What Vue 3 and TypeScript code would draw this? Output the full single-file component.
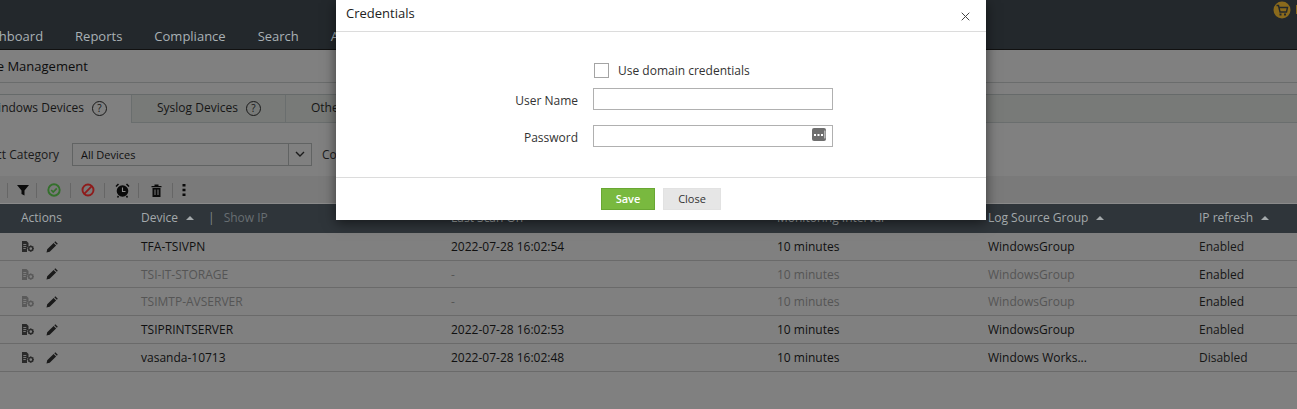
<script setup lang="ts">
interface Row { device: string; scan: string; group: string; ip: string; off?: boolean; short?: boolean }
const nav: string[] = ['Dashboard', 'Reports', 'Compliance', 'Search', 'Alerts']
const rows: Row[] = [
  { device: 'TFA-TSIVPN', scan: '2022-07-28 16:02:54', group: 'WindowsGroup', ip: 'Enabled' },
  { device: 'TSI-IT-STORAGE', scan: '-', group: 'WindowsGroup', ip: 'Enabled', off: true, short: true },
  { device: 'TSIMTP-AVSERVER', scan: '-', group: 'WindowsGroup', ip: 'Enabled', off: true },
  { device: 'TSIPRINTSERVER', scan: '2022-07-28 16:02:53', group: 'WindowsGroup', ip: 'Enabled' },
  { device: 'vasanda-10713', scan: '2022-07-28 16:02:48', group: 'Windows Works...', ip: 'Disabled' },
]
</script>

<template>
  <div class="page">
    <header class="top">
      <div class="util">
        <svg class="cart" width="18" height="18" viewBox="0 0 18 18">
          <circle cx="9" cy="9" r="8.5" fill="#8a6a1c" />
          <path d="M3.5 4.5h2l1.500 6.500h6.500l1-4.500H6" fill="none" stroke="#23282c" stroke-width="1.400" />
          <rect x="6.500" y="12.500" width="2" height="2" fill="#23282c" />
          <rect x="11" y="12.500" width="2" height="2" fill="#23282c" />
        </svg>
        <span class="util-mark"></span>
      </div>
      <nav class="nav">
        <span v-for="n in nav" :key="n">{{ n }}</span>
      </nav>
    </header>

    <div class="crumb">Device Management</div>

    <div class="tabs">
      <div class="tab active">Windows Devices <i class="q">?</i></div>
      <div class="tab syslog">Syslog Devices <i class="q">?</i></div>
      <div class="tab">Other Devices</div>
    </div>

    <div class="filter">
      <span class="filter-label">Select Category</span>
      <div class="select">
        <span class="select-val">All Devices</span>
        <span class="select-btn">
          <svg width="10" height="6" viewBox="0 0 10 6"><path d="M1 1l4 4 4-4" fill="none" stroke="#1c1c1c" stroke-width="1.400" /></svg>
        </span>
      </div>
      <span class="filter-next">Columns</span>
    </div>

    <div class="toolbar">
      <span class="tool first">
        <svg width="12" height="12" viewBox="0 0 12 12"><path d="M0 1h12L7.500 6.500V11.500L4.500 10V6.500z" fill="#0a0a0a" /></svg>
      </span>
      <span class="tool">
        <svg width="14" height="14" viewBox="0 0 14 14"><circle cx="7" cy="7" r="5.700" fill="none" stroke="#34702c" stroke-width="1.900" /><path d="M4.200 7l2 2 3.600-3.600" fill="none" stroke="#34702c" stroke-width="1.700" /></svg>
      </span>
      <span class="tool">
        <svg width="14" height="14" viewBox="0 0 14 14"><circle cx="7" cy="7" r="5.500" fill="none" stroke="#8e1c1c" stroke-width="1.900" /><path d="M3.200 10.800l7.600-7.600" stroke="#8e1c1c" stroke-width="1.900" /></svg>
      </span>
      <span class="tool">
        <svg width="15" height="15" viewBox="0 0 15 15"><circle cx="7.500" cy="8" r="5.800" fill="#0a0a0a" /><path d="M7.500 4.500V8.500H10.500" fill="none" stroke="#8a8a8a" stroke-width="1.100" /><path d="M1 3.500L3.500 1M14 3.500L11.500 1M3.500 13L2.500 14.500M11.500 13L12.500 14.500" stroke="#0a0a0a" stroke-width="1.500" /></svg>
      </span>
      <span class="tool">
        <svg width="11" height="13" viewBox="0 0 11 13"><path d="M0.500 2h10v1.300h-10zM3.500 0.500h4v1.500h-4zM1.500 4h8v9h-8z" fill="#0a0a0a" /><path d="M4 5.500v5.500M7 5.500v5.500" stroke="#7c7c7c" stroke-width="1" /></svg>
      </span>
      <span class="tool last">
        <svg width="4" height="12" viewBox="0 0 4 12"><path d="M0.500 0h3v2.500h-3zM0.500 4.700h3v2.500h-3zM0.500 9.400h3v2.500h-3z" fill="#0a0a0a" /></svg>
      </span>
    </div>

    <div class="table">
      <div class="thead grid">
        <span>Actions</span>
        <span class="device-h">Device <i class="sort"></i><em class="pipe">|</em><em class="showip">Show IP</em></span>
        <span>Last Scan On</span>
        <span>Monitoring Interval</span>
        <span>Log Source Group <i class="sort"></i></span>
        <span>IP refresh <i class="sort"></i></span>
      </div>
      <div v-for="r in rows" :key="r.device" class="row grid" :class="{ off: r.off, short: r.short }">
        <span class="acts">
          <svg class="ico-conf" width="12" height="11" viewBox="0 0 12 11"><path d="M0 0h4.500L6.500 2v3.200A3.500 3.500 0 0 0 5 8.500V11H0z" fill="currentColor" /><path d="M1.300 3.500h3M1.300 5.500h3M1.300 7.500h2.500" stroke="#808080" stroke-width="0.900" /><circle cx="8.800" cy="7.600" r="2.100" fill="none" stroke="currentColor" stroke-width="1.500" /><path d="M8.800 4.200v6.800M5.400 7.600h6.600M6.400 5.200l4.800 4.800M11.200 5.200l-4.800 4.800" stroke="currentColor" stroke-width="0.900" stroke-dasharray="1.300 4.200" /></svg>
          <svg width="12" height="12" viewBox="0 0 12 12"><path d="M0.500 11.500l0.700-3.200 6.400-6.400 2.500 2.500-6.400 6.400zM8.300 1.200l1-1 2.500 2.500-1 1z" fill="#1a1a1a" /></svg>
        </span>
        <span>{{ r.device }}</span>
        <span>{{ r.scan }}</span>
        <span>10 minutes</span>
        <span>{{ r.group }}</span>
        <span class="ip">{{ r.ip }}</span>
      </div>
    </div>

    <section class="modal">
      <div class="m-head">
        <span>Credentials</span>
        <svg width="9" height="9" viewBox="0 0 9 9"><path d="M0.700 0.700l7.600 7.600M8.300 0.700l-7.600 7.600" stroke="#444" stroke-width="1" /></svg>
      </div>
      <div class="m-body">
        <div class="field check">
          <span></span>
          <label class="check-label"><i class="box"></i><span class="check-text">Use domain credentials</span></label>
        </div>
        <div class="field">
          <span class="lbl">User Name</span>
          <div class="inp"></div>
        </div>
        <div class="field">
          <span class="lbl">Password</span>
          <div class="inp">
            <svg class="dots" width="14" height="13" viewBox="0 0 14 13"><rect width="14" height="13" rx="2" fill="#6e6e6e" /><rect x="2" y="6" width="2" height="2" fill="#fff" /><rect x="5.500" y="6" width="2" height="2" fill="#fff" /><rect x="9" y="6" width="2" height="2" fill="#fff" /><rect x="12.500" y="2.500" width="0.800" height="8" fill="#fff" /></svg>
          </div>
        </div>
      </div>
      <div class="m-foot">
        <button class="btn save" type="button">Save</button>
        <button class="btn close" type="button">Close</button>
      </div>
    </section>
  </div>
</template>

<style scoped>
.page {
  position: relative;
  width: 1297px;
  height: 409px;
  overflow: hidden;
  background: #808080;
  font-family: "Open Sans", sans-serif;
  font-size: 12px;
  color: #111;
}
.top {
  height: 50px;
  background: #23282c;
  border-bottom: 1px solid #111;
  box-sizing: border-box;
  display: flex;
  flex-direction: column;
}
.util { height: 19px; display: flex; justify-content: flex-end; align-items: center; margin-right: -7px; gap: 5px; }
.util-mark { width: 8px; height: 9px; background: #8a6a1c; }
.nav {
  display: flex;
  gap: 32px;
  margin-left: -24px;
  color: #a9b1b5;
  font-size: 13px;
  line-height: 18px;
  margin-top: 8px;
}
.crumb {
  height: 33px;
  box-sizing: border-box;
  border-bottom: 1px solid #6a6c6c;
  margin-left: -36px;
  line-height: 32px;
  font-size: 13px;
  color: #0c0c0c;
}
.tabs {
  margin-top: 11px;
  height: 29px;
  box-sizing: border-box;
  background: #787a78;
  border-top: 1px solid #666a6a;
  border-bottom: 1px solid #6a6e6e;
  display: flex;
  color: #161616;
}
.tab {
  padding: 0 20px 0 25px;
  line-height: 25px;
  border-right: 1px solid #6a6e6e;
  white-space: nowrap;
}
.tab.active {
  width: 164px;
  margin-left: -32px;
  box-sizing: border-box;
  background: #808080;
  height: 28px;
  text-align: right;
  padding: 0 24px 0 0;
}
.tab.syslog { width: 154px; box-sizing: border-box; }
.q {
  display: inline-block;
  width: 13px;
  height: 13px;
  margin-left: 5px;
  border: 1px solid #1a1a1a;
  border-radius: 50%;
  font-style: normal;
  font-size: 10px;
  line-height: 13px;
  text-align: center;
}
.filter {
  height: 53px;
  display: flex;
  align-items: center;
  padding-top: 9px;
  box-sizing: border-box;
  color: #1a1a1a;
}
.filter-label { margin-left: -27px; width: 99px; white-space: nowrap; }
.select {
  width: 240px;
  height: 23px;
  box-sizing: border-box;
  border: 1px solid #616363;
  display: flex;
  font-size: 11px;
  color: #101010;
}
.select-val { flex: 1; padding-left: 8px; line-height: 21px; }
.select-btn { width: 22px; border-left: 1px solid #616363; display: flex; align-items: center; justify-content: center; }
.filter-next { margin-left: 10px; }
.toolbar {
  height: 27px;
  background: #7a7a7a;
  display: flex;
  align-items: center;
  box-sizing: border-box;
  padding: 1px 0 0 7px;
}
.tool {
  width: 34px;
  height: 15px;
  border-left: 1px solid #666;
  display: flex;
  align-items: center;
  justify-content: center;
  box-sizing: border-box;
  padding-left: 1px;
}
.tool.first { width: 29px; }
.tool.last { width: 22px; }
.grid {
  display: grid;
  grid-template-columns: 120px 310px 326px 211px 211px 1fr;
  padding-left: 21px;
  align-items: center;
}
.thead {
  height: 30px;
  background: #2f353a;
  color: #a4a9ab;
  border-top: 1px solid #8a8a8a;
  padding-bottom: 3px;
  box-sizing: border-box;
  white-space: nowrap;
}
.sort {
  display: inline-block;
  margin-left: 5px;
  vertical-align: 2px;
  border-left: 4px solid transparent;
  border-right: 4px solid transparent;
  border-bottom: 4px solid #a4a9ab;
}
.pipe { font-style: normal; margin: 0 9px 0 14px; color: #80868a; }
.showip { font-style: normal; color: #686e72; }
.row {
  height: 28px;
  box-sizing: border-box;
  border-bottom: 1px solid #6a6a6a;
  color: #101010;
  white-space: nowrap;
}
.row.short { height: 27px; }
.row.off { color: #555; }
.ip { color: #161616; }
.acts { display: flex; gap: 12px; align-items: center; color: #2a2a2a; padding-left: 1px; }
.row.off .ico-conf { color: #5a5a5a; }
.modal {
  position: absolute;
  left: 336px;
  top: 0;
  width: 650px;
  height: 220px;
  background: #fff;
  box-shadow: 0 3px 12px rgba(0, 0, 0, 0.55);
  color: #333;
}
.m-head {
  height: 32px;
  box-sizing: border-box;
  border-bottom: 1px solid #dcdcdc;
  display: flex;
  align-items: center;
  justify-content: space-between;
  padding: 0 16px 5px 10px;
  font-size: 13px;
  color: #222;
}
.m-head svg { margin-top: 7px; }
.m-body {
  height: 145px;
  box-sizing: border-box;
  padding-top: 29px;
  display: flex;
  flex-direction: column;
}
.field {
  display: grid;
  grid-template-columns: 242px 240px;
  column-gap: 15px;
  align-items: center;
  margin-bottom: 15px;
}
.field.check { margin-bottom: 10px; height: 17px; }
.lbl { text-align: right; color: #333; padding-top: 2px; }
.check-label { display: flex; align-items: center; color: #333; margin-left: 1px; }
.check-text { padding-top: 1px; margin-left: -1px; }
.box {
  width: 15px;
  height: 15px;
  box-sizing: border-box;
  border: 1px solid #a4a4a4;
  margin-right: 10px;
}
.inp {
  position: relative;
  height: 22px;
  box-sizing: border-box;
  border: 1px solid #b0b0b0;
}
.dots { position: absolute; right: 6px; top: 2px; }
.m-foot {
  height: 43px;
  box-sizing: border-box;
  border-top: 1px solid #dcdcdc;
  display: flex;
  justify-content: center;
  gap: 8px;
  padding-top: 10px;
}
.btn {
  height: 22px;
  padding: 0 0 1px;
  border: 1px solid transparent;
  font-family: inherit;
  font-size: 11px;
  box-sizing: border-box;
}
.save { width: 54px; background: #79b93f; border-color: #69a733; color: #fff; font-weight: 600; }
.close { width: 58px; background: #e6e6e6; border-color: #e2e2e2; color: #333; }
</style>
